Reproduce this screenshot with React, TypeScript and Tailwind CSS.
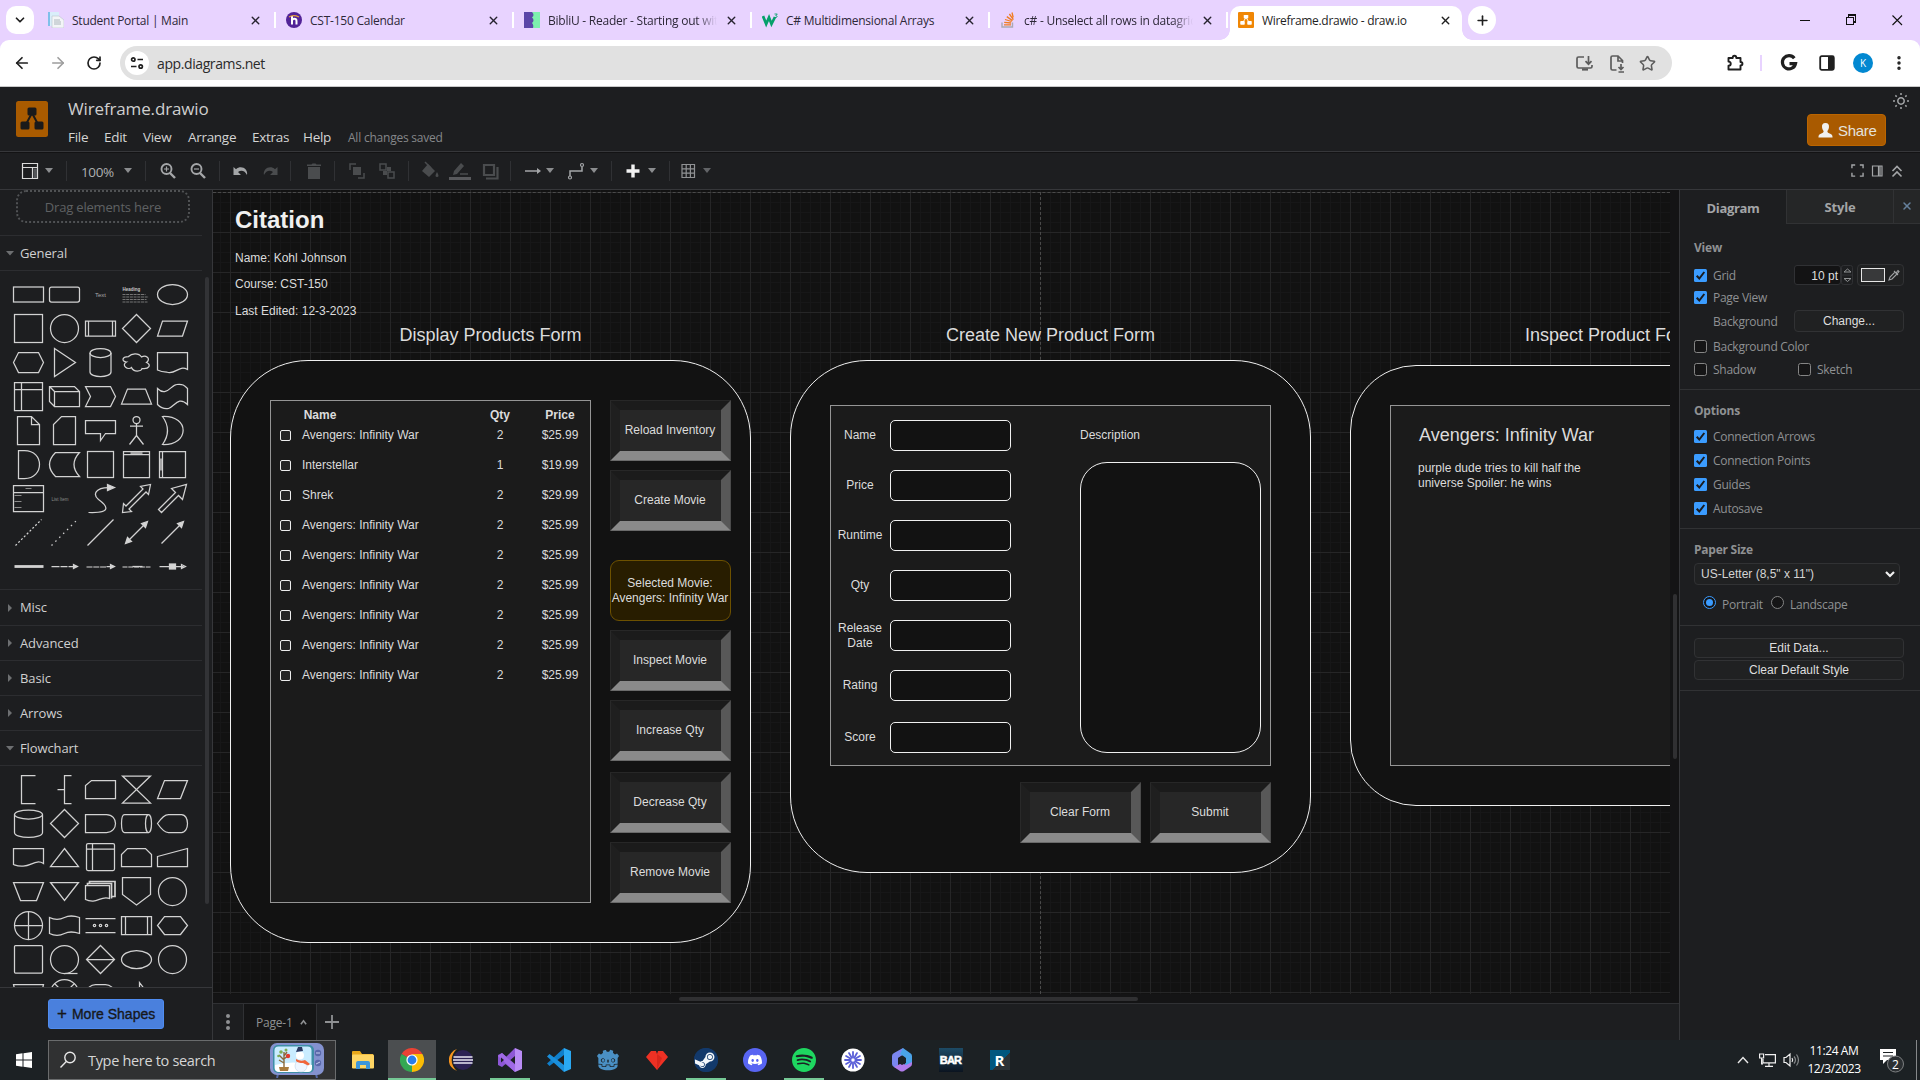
import React from "react";
import { ArrowLeft, ArrowRight, RotateCw, ChevronDown, X, Plus, Star, EllipsisVertical } from "lucide-react";
import { SiDiscord, SiSpotify, SiSteam, SiGodotengine } from "react-icons/si";

const UI = "font-['Open_Sans',sans-serif]";
const ARIAL = "font-['Liberation_Sans',sans-serif]";

/* ---------- Browser chrome ---------- */

function Tab({ icon, title, fade }: { icon: React.ReactNode; title: string; fade?: boolean }) {
  return (
    <div className="flex h-full w-[238px] shrink-0 items-center">
      <div className="flex h-4 w-4 shrink-0 items-center justify-center">{icon}</div>
      <div
        className={
          "ml-2 w-[169px] overflow-hidden whitespace-nowrap pt-[2px] text-[12px] tracking-[-0.24px] text-[#2d2838] " +
          (fade ? "[mask-image:linear-gradient(to_right,black_88%,transparent)]" : "")
        }
      >
        {title}
      </div>
      <X className="ml-[8px] h-[13px] w-[13px] shrink-0 text-[#26222e]" strokeWidth={2.6} />
      <div className="ml-[12px] h-4 w-[2px] shrink-0 bg-white" />
    </div>
  );
}

const DrawioMark = ({ bg, fg }: { bg: string; fg: string }) => (
  <svg viewBox="0 0 32 36" preserveAspectRatio="none" className="h-full w-full">
    <rect width="32" height="36" rx="2.5" fill={bg} />
    <path d="M16 12 8.500 26M16 12l7.500 14" stroke={fg} strokeWidth="2" />
    <rect x="11.500" y="6.500" width="9" height="8" rx="1.500" fill={fg} />
    <rect x="4.500" y="20.500" width="9" height="8" rx="1.500" fill={fg} />
    <rect x="18.500" y="20.500" width="9" height="8" rx="1.500" fill={fg} />
  </svg>
);

function TabStrip() {
  return (
    <div className={"flex h-10 items-stretch bg-[#e8d3ff] " + UI}>
      <div className="ml-[6px] mt-[6px] flex h-7 w-7 shrink-0 items-center justify-center rounded-[10px] bg-white">
        <ChevronDown className="h-[14px] w-[14px] text-[#1f1f1f]" strokeWidth={3} />
      </div>
      <div className="ml-[14px] flex h-[40px]">
        <Tab
          title="Student Portal | Main"
          icon={
            <svg viewBox="0 0 16 16" className="h-4 w-4">
              <rect width="11" height="14" fill="#7fc0ea" />
              <rect x="2" width="9" height="14" fill="#d9eefa" />
              <path d="M4 4h7l5 4v8H4z" fill="#f3f5f7" stroke="#b8c4cc" strokeWidth=".6" />
              <path d="M6 8h6M6 10h7M6 12h7" stroke="#9aa6ad" strokeWidth=".8" />
            </svg>
          }
        />
        <Tab
          title="CST-150 Calendar"
          icon={
            <svg viewBox="0 0 16 16" className="h-4 w-4">
              <circle cx="8" cy="8" r="8" fill="#522398" />
              <path d="M6 4v8.500M6 9c0-3 4.500-3 4.500 0v3.500" stroke="#fff" strokeWidth="2" fill="none" />
              <path d="M3 5c3-2 6-2 10 0" stroke="#e8a33b" strokeWidth="1.200" fill="none" />
            </svg>
          }
        />
        <Tab
          title="BibliU - Reader - Starting out with"
          fade
          icon={
            <svg viewBox="0 0 16 16" className="h-4 w-4">
              <rect width="16" height="16" fill="#7df0ae" />
              <path d="M0 0h8c2 2 2 4 0 5.500 2 1.500 2 4 0 5.500 1.500 2 1.500 3 1 5H0z" fill="#5b46a8" />
            </svg>
          }
        />
        <Tab
          title="C# Multidimensional Arrays"
          icon={
            <svg viewBox="0 0 16 16" className="h-4 w-4">
              <path d="M1 4l3.200 8L7 5.500 9.500 12 13 5" stroke="#05a06b" strokeWidth="2.700" fill="none" />
              <path d="M12.500 2h2.800l-1.500 1.600c2 0 1.800 2.300-.8 1.800" stroke="#05a06b" strokeWidth=".9" fill="none" />
            </svg>
          }
        />
        <div className="flex w-[236px] overflow-hidden">
          <Tab
            title="c# - Unselect all rows in datagridview"
            fade
            icon={
              <svg viewBox="0 0 16 16" className="h-4 w-4">
                <path d="M2 10.500V15h10.500v-4.500" stroke="#a9a9b4" strokeWidth="1.400" fill="none" />
                <path d="M4 12.800h7M4.200 10.300l6.900.7M5 7.500l6.600 2M6.800 4.600l5.700 4M9.400 2l4 5.600M12 .500l1.200 5" stroke="#f07c22" strokeWidth="1.300" />
              </svg>
            }
          />
        </div>
      </div>
      <div className="relative -ml-[6px] mt-[6px] flex h-[34px] w-[232px] items-center rounded-t-[10px] bg-white pb-[6px] pl-2 before:absolute before:-left-[10px] before:bottom-0 before:h-[10px] before:w-[10px] before:bg-[radial-gradient(circle_at_0_0,#e8d3ff_9.500px,white_10px)] after:absolute after:-right-[10px] after:bottom-0 after:h-[10px] after:w-[10px] after:bg-[radial-gradient(circle_at_100%_0,#e8d3ff_9.500px,white_10px)]">
        <div className="h-4 w-4 shrink-0">
          <DrawioMark bg="#f08705" fg="#fff" />
        </div>
        <div className="ml-2 w-[169px] whitespace-nowrap pt-[2px] text-[12px] tracking-[-0.3px] text-[#1f1f1f]">Wireframe.drawio - draw.io</div>
        <X className="ml-[8px] h-[13px] w-[13px] shrink-0 text-[#1f1f1f]" strokeWidth={2.600} />
      </div>
      <div className="ml-[6px] mt-[6px] flex h-7 w-7 items-center justify-center rounded-full bg-white">
        <Plus className="h-[15px] w-[15px] text-[#1f1f1f]" strokeWidth={2.600} />
      </div>
      <svg className="ml-auto mr-[16px] mt-[10px] h-5 w-[110px]" viewBox="0 0 110 20" fill="none" stroke="#111" strokeWidth="1.100" shapeRendering="crispEdges">
        <path d="M6 10.500h10" />
        <rect x="52.500" y="7.500" width="7" height="7" />
        <path d="M54.500 7v-2h7v7h-2" />
        <path d="M98.500 5.500l9.500 9.500M108 5.500l-9.500 9.500" shapeRendering="auto" />
      </svg>
    </div>
  );
}

function AddressBar() {
  return (
    <div className={"bg-[#e8d3ff] " + UI}>
      <div className="flex h-[47px] items-center rounded-t-[9px] border-b border-[#c9c9c9] bg-white text-[#1f1f1f]">
        <ArrowLeft className="ml-[13px] h-[18px] w-[18px]" strokeWidth={2.300} />
        <ArrowRight className="ml-[18px] h-[18px] w-[18px] text-[#9d9d9d]" strokeWidth={2.200} />
        <RotateCw className="ml-[19px] h-[16px] w-[16px]" strokeWidth={2.500} />
        <div className="ml-[18px] flex h-[34px] w-[1552px] items-center rounded-full bg-[#e1e1e1] pl-[5px]">
          <div className="flex h-6 w-6 items-center justify-center rounded-full bg-white">
            <svg viewBox="0 0 14 14" className="h-[14px] w-[14px]" fill="none" stroke="#1f1f1f" strokeWidth="1.700">
              <circle cx="3.300" cy="3.500" r="1.700" />
              <path d="M7.500 3.500H13M1 10.500h5.500" />
              <circle cx="10.700" cy="10.500" r="1.700" />
            </svg>
          </div>
          <div className="ml-2 text-[14px] tracking-[-0.400px] text-[#2b2b2b]">app.diagrams.net</div>
          <svg className="ml-auto h-5 w-5" viewBox="0 0 20 20" fill="none" stroke="#5c5c5c" strokeWidth="1.700">
            <path d="M10 4H4.500Q3 4 3 5.500v8Q3 15 4.500 15h12q1.500 0 1.500-1.500V12M14.500 3v8M11.500 8.200l3 3 3-3" />
            <path d="M8 16.500h6" strokeWidth="2.200" />
          </svg>
          <svg className="ml-[13px] h-5 w-5" viewBox="0 0 20 20" fill="none" stroke="#5c5c5c" strokeWidth="1.700">
            <path d="M9.500 17H5.500Q4 17 4 15.500v-11Q4 3 5.500 3H11l4.500 4.500V10M11 3v5h4.500M14 11v5M11.500 14l2.500 2.500 2.500-2.500M11.500 19h5.500" />
          </svg>
          <Star className="ml-[12px] mr-[16px] h-[17px] w-[17px] text-[#5c5c5c]" strokeWidth={2.200} />
        </div>
        <svg className="ml-[53px] h-5 w-5" viewBox="0 0 20 20" fill="none" stroke="#1f1f1f" strokeWidth="1.900" strokeLinejoin="round">
          <path d="M3.500 5h4.200c0-3 3.600-3 3.600 0H15.500v4c2.600 0 2.600 3.500 0 3.500V16.500h-12v-3.700c3 0 3-4.200 0-4.200z" />
        </svg>
        <div className="ml-[15px] h-4 w-[2px] bg-[#e8d3ff]" />
        <svg className="ml-[18px] h-[18px] w-[18px]" viewBox="0 0 18 18" fill="none" stroke="#1f1f1f" strokeWidth="3.200">
          <path d="M14.300 4.300A6.600 6.600 0 1 0 15.500 9.600H9.500" />
        </svg>
        <svg className="ml-[21px] h-[16px] w-[16px]" viewBox="0 0 16 16">
          <rect x="1.200" y="1.200" width="13.600" height="13.600" rx="1.500" fill="none" stroke="#1f1f1f" strokeWidth="1.800" />
          <rect x="9" y="1" width="6" height="14" fill="#1f1f1f" />
        </svg>
        <div className="ml-[18px] flex h-5 w-5 items-center justify-center rounded-full bg-[#0288d1] text-[10px] text-white">K</div>
        <EllipsisVertical className="ml-[17px] h-[18px] w-[18px]" strokeWidth={2.600} />
      </div>
    </div>
  );
}

/* ---------- Application header ---------- */

const MENUS = [
  { t: "File", c: "w-[36px]" },
  { t: "Edit", c: "w-[39px]" },
  { t: "View", c: "w-[45px]" },
  { t: "Arrange", c: "w-[64px]" },
  { t: "Extras", c: "w-[51px]" },
  { t: "Help", c: "w-[45px]" },
];

function Header() {
  return (
    <div className={"flex h-[65px] border-b border-[#36373a] bg-[#1d1e20] " + UI}>
      <div className="ml-4 mt-[14px] h-9 w-8">
        <DrawioMark bg="#a95b00" fg="#1a1a1a" />
      </div>
      <div className="ml-5 mt-[9px]">
        <div className="text-[17px] leading-[26px] tracking-[-0.14px] text-[#cfcfcf]">Wireframe.drawio</div>
        <div className="mt-[5px] flex text-[13.500px] leading-[20px] tracking-[-0.300px] text-[#d4d4d4]">
          {MENUS.map((m) => (
            <div key={m.t} className={m.c}>
              {m.t}
            </div>
          ))}
          <div className="text-[12px] leading-[21px] tracking-[-0.220px] text-[#85878a]">All changes saved</div>
        </div>
      </div>
      <div className={"ml-auto mt-[27px] flex h-8 w-[79px] items-center rounded-[4px] border border-[#bb6500] bg-[#a95a00] pl-[10px] pt-[2px] text-[15px] tracking-[-0.3px] text-[#e5e2dd] " + ARIAL}>
        <svg viewBox="0 0 16 16" className="mb-[2px] mr-[5px] h-[15px] w-[15px]" fill="#f0f0f0">
          <path d="M8 0c3 0 4 2 3.700 4.500C11.400 7 10.500 8 10 8.600c0 1.500.5 1.800 2.500 2.500C15 12 15.500 13 15.500 15.500H.5C.5 13 1 12 3.500 11.100 5.500 10.400 6 10.100 6 8.600 5.500 8 4.600 7 4.300 4.500 4 2 5 0 8 0z" />
        </svg>
        Share
      </div>
      <svg className="ml-[2px] mr-[6px] mt-[4px] h-[20px] w-[26px]" viewBox="-13 -10 26 20" fill="none" stroke="#a4a6a8" strokeWidth="1.500">
        <circle r="3.200" />
        <path d="M0-8v2M0 6v2M-8 0h2M6 0h2M-5.600-5.600l1.300 1.300M4.300 4.300l1.300 1.300M-5.600 5.600l1.300-1.300M4.300-4.300l1.300-1.300" />
      </svg>
    </div>
  );
}

const Sep = ({ c }: { c: string }) => <div className={"h-5 w-px shrink-0 bg-[#303134] " + c} />;
const Caret = ({ c, dim }: { c: string; dim?: boolean }) => (
  <svg viewBox="0 0 10 6" className={"h-[5px] w-[8px] shrink-0 " + c}>
    <path d="M0 0h10L5 6z" fill={dim ? "#626467" : "#8b8d8f"} />
  </svg>
);
const Ico = ({ c, s = "#b0b2b4", children }: { c: string; s?: string; children: React.ReactNode }) => (
  <svg viewBox="0 0 20 20" className={"h-5 w-5 shrink-0 " + c} fill="none" stroke={s} strokeWidth="1.500">
    {children}
  </svg>
);

function Toolbar() {
  const dim = "#4a4c4e";
  return (
    <div className={"flex h-[38px] items-center border-b border-[#36373a] bg-[#1d1e20] shadow-[inset_0_1px_0_#131314] " + UI}>
      <Ico c="ml-[20px]" s="#dadada">
        <path d="M2.500 2.500h15v15h-15zM2.500 6.500h15M12.500 6.500v11" strokeWidth="1.200" />
        <path d="M13.500 7.500h3.500v9.500h-3.500z" fill="#55575a" stroke="none" />
      </Ico>
      <Caret c="ml-[5px]" />
      <Sep c="ml-[13px]" />
      <div className="ml-[14px] mt-[4px] w-[40px] text-[13.500px] tracking-[-0.4px] text-[#aeb0b2]">100%</div>
      <Caret c="ml-[3px]" />
      <Sep c="ml-[13px]" />
      <Ico c="ml-[12px]" s="#a4a6a8">
        <circle cx="8.500" cy="8" r="5" strokeWidth="1.900" />
        <path d="M12 12l5 5" strokeWidth="2.400" />
        <path d="M6 8h5M8.500 5.500v5" strokeWidth="1.200" />
      </Ico>
      <Ico c="ml-[10px]" s="#a4a6a8">
        <circle cx="8.500" cy="8" r="5" strokeWidth="1.900" />
        <path d="M12 12l5 5" strokeWidth="2.400" />
        <path d="M6 8h5" strokeWidth="1.200" />
      </Ico>
      <Sep c="ml-[11px]" />
      <Ico c="ml-[11px]" s="none">
        <path d="M2.500 6v8h7.500l-3-3c3-2.500 7-1.500 9 3 1.500-6-6-10.500-11-5.700z" fill="#a4a6a8" />
      </Ico>
      <Ico c="ml-[9px]" s="none">
        <path d="M17.500 6v8H10l3-3c-3-2.500-7-1.500-9 3-1.500-6 6-10.500 11-5.700z" fill={dim} />
      </Ico>
      <Sep c="ml-[10px]" />
      <Ico c="ml-[13px]" s="none">
        <path d="M4 6h12v12H4zM3 3.500h4.500L8.500 2.500h3l1 1H17V5H3z" fill={dim} />
      </Ico>
      <Sep c="ml-[10px]" />
      <Ico c="ml-[12px]" s={dim}>
        <path d="M9 3H3v6M11 17h6v-5" />
        <path d="M6 6h8v8H6z" fill={dim} stroke="none" />
      </Ico>
      <Ico c="ml-[10px]" s={dim}>
        <path d="M3 3h6v6H3z" />
        <path d="M10 6h4v4h-4zM6 10h4v4H6z" fill={dim} stroke="none" />
        <path d="M11 11h6v6h-6z" />
      </Ico>
      <Sep c="ml-[11px]" />
      <Ico c="ml-[11px]" s="none">
        <path d="M8 3l7 7-6 6-7-6z" fill={dim} />
        <path d="M5 1l6 6" stroke={dim} strokeWidth="1.500" />
        <path d="M17 11q3 5 0 5t0-5z" fill={dim} />
      </Ico>
      <svg viewBox="0 0 22 20" className="ml-[9px] h-5 w-[22px] shrink-0">
        <path d="M4 14l1-4 7-8 3 3-7 8z" fill={dim} />
        <path d="M11 13h8" stroke={dim} strokeWidth="1.500" />
        <rect x="0" y="16" width="22" height="3" fill="#58595c" />
      </svg>
      <Ico c="ml-[9px]" s={dim}>
        <path d="M4 4h10v10H4z" strokeWidth="2.200" />
        <path d="M17.500 6v11.500H6" strokeWidth="2.200" />
      </Ico>
      <Sep c="ml-[10px]" />
      <Ico c="ml-[12px]" s="#a4a6a8">
        <path d="M2 10h14" />
        <path d="M14 7l4 3-4 3z" fill="#a4a6a8" stroke="none" />
      </Ico>
      <Caret c="ml-[3px]" />
      <Ico c="ml-[12px]" s="#a4a6a8">
        <path d="M4 15v-5h12V6" />
        <circle cx="4" cy="16.500" r="1.500" strokeWidth="1.200" />
        <circle cx="16" cy="4" r="1.500" strokeWidth="1.200" />
      </Ico>
      <Caret c="ml-[4px]" />
      <Sep c="ml-[13px]" />
      <Ico c="ml-[11px]" s="#f2f2f2">
        <path d="M10 3.500v13M3.500 10h13" strokeWidth="3.400" />
      </Ico>
      <Caret c="ml-[5px]" />
      <Sep c="ml-[13px]" />
      <Ico c="ml-[8px]" s="#909294">
        <path d="M4 3.500h12.500v13H4zM8.200 3.500v13M12.400 3.500v13M4 7.800h12.500M4 12.200h12.500" strokeWidth="1.200" />
      </Ico>
      <Caret c="ml-[5px]" dim />
      <div className="ml-auto mr-[16px] flex items-center gap-[6px] text-[#a4a6a8]">
        <svg viewBox="0 0 14 14" className="h-[13px] w-[13px]" fill="none" stroke="currentColor" strokeWidth="1.500">
          <path d="M1 4.500V1h3.500M9.500 1H13v3.500M13 9.500V13H9.500M4.500 13H1V9.500" />
        </svg>
        <svg viewBox="0 0 12 12" className="h-[12px] w-[14px]" fill="none" stroke="currentColor" strokeWidth="1.200">
          <path d="M1.500 1h9.500v10H1.500zM7.500 1v10M9 1v10" />
        </svg>
        <svg viewBox="0 0 14 14" className="h-[14px] w-[14px]" fill="none" stroke="currentColor" strokeWidth="1.600">
          <path d="M2.500 7L7 2.500 11.500 7M2.500 12.500L7 8l4.500 4.500" />
        </svg>
      </div>
    </div>
  );
}

/* ---------- Shape library (each drawing is centred on 0,0) ---------- */

const GENERAL: React.ReactNode[] = [
  <rect x="-15" y="-7.500" width="30" height="15" />,
  <rect x="-15" y="-7.500" width="30" height="15" rx="2" />,
  <text x="0" y="2" fontSize="6" textAnchor="middle" stroke="none" fill="#a8a8a8">Text</text>,
  <g>
    <text x="-14" y="-3.500" fontSize="4.500" fontWeight="bold" stroke="none" fill="#c8c8c8">Heading</text>
    <path d="M-14 0h23M-14 2.500h26M-14 5h24M-14 7.500h25" strokeWidth=".8" strokeDasharray="3 .7" stroke="#8b8b8b" />
  </g>,
  <ellipse rx="15" ry="10" />,
  <rect x="-14" y="-14" width="28" height="28" />,
  <circle r="14" />,
  <path d="M-15-7.500h30v15h-30zM-12-7.500v15M12-7.500v15" />,
  <path d="M0-14L14 0 0 14-14 0z" />,
  <path d="M-10-7.500h25l-5 15h-25z" />,
  <path d="M-10-10h20l5 10-5 10h-20l-5-10z" />,
  <path d="M-10-14L11 0-10 14z" />,
  <g>
    <ellipse cy="-9.500" rx="10.500" ry="4.500" />
    <path d="M-10.500-9.500v19c0 6 21 6 21 0v-19" />
  </g>,
  <path d="M-8-6C-15-6-15-1-10-0.500-16 3-8 8-5 5-3 10 5 9 5.500 6 13 7 15 2 10 0 15-4 9-8 5-5.500 2-10-5-9-8-6z" />,
  <path d="M-15-10h30v17c-9-5-12 6-21 2.500-4 0-6-.5-9-2z" />,
  <path d="M-14-14h28v28h-28zM-7-14v28M-14-7h28" />,
  <path d="M-15-10H10l5 5v15H-10l-5-5zM-10 10V-5H15M-10-5l-5-5" />,
  <path d="M-15-10h25l5 10-5 10h-25l5-10z" />,
  <path d="M-9-7.500H9l6 15h-30z" />,
  <path d="M-15-8c9 9 14-4 19-4 6-1 8 1 11 4V8C6-1 2 10-4 12c-5 1-8-1-11-4z" />,
  <path d="M-11-14h14l8 8v20h-22zM3-14v8h8" />,
  <path d="M-3-14h14v28h-22V-6z" />,
  <path d="M-15-10h30V3H5L0 10V3h-15z" />,
  <g>
    <circle cy="-10.500" r="3.500" />
    <path d="M0-7V5M-6.500-4.500h13M0 5l-7 9M0 5l7 9" />
  </g>,
  <path d="M-10-14c28-1 27 29 0 28q10-14 0-28z" />,
  <path d="M-10-14H-4c20 0 20 28 0 28H-10z" />,
  <path d="M-9-12h24q-11 12 0 24H-9q-12-12 0-24z" />,
  <rect x="-13" y="-13" width="26" height="26" />,
  <path d="M-13-13h26v26h-26zM-13-10h26M-6-11.500h12" />,
  <path d="M-13-13h26v26h-26zM-10-13v26M-11.500-6v12" />,
  <g>
    <path d="M-15-13h30v26h-30zM-15-6h30" />
    <path d="M-14-3h7M-14 3h7M-14 9h7M-3-10h6" strokeWidth=".9" stroke="#999" />
  </g>,
  <text x="-13" y="2" fontSize="4.500" stroke="none" fill="#8b8b8b">List Item</text>,
  <g>
    <path d="M-12 14c26 1 17-8 10-13-6-5-3-12 10-12" />
    <path d="M7-14l7 3-7 3z" fill="#d5d5d5" />
  </g>,
  <path d="M-14 14l1-9 2.500 2.500L6.500-9.500 4-12l10-2-2 10-2.500-2.500L-7.500 10.500-5 13z" />,
  <path d="M-14 11l17-17-4-4 15-4-4 15-4-4-17 17z" />,
  <path d="M-13 13L13-13" strokeDasharray="2 2" />,
  <path d="M-13 13L13-13" strokeDasharray="1.500 4" />,
  <path d="M-13 13L13-13" />,
  <g>
    <path d="M-9 9L9-9" />
    <path d="M5-9l6-2-2 6zM-5 9l-6 2 2-6z" fill="#d5d5d5" />
  </g>,
  <g>
    <path d="M-11 11L9-9" />
    <path d="M5-9l6-2-2 6z" fill="#d5d5d5" />
  </g>,
  <path d="M-14 0h29" strokeWidth="2.800" />,
  <g>
    <path d="M-13 0h8M-4 0h7" strokeDasharray="8 1" />
    <path d="M4 0h8M9-2l4 2-4 2z" fill="#d5d5d5" />
  </g>,
  <g>
    <path d="M-14 .500h20" strokeDasharray="6 .8" stroke="#9b9b9b" strokeWidth="1.700" />
    <path d="M6 0h6M10-2l4 2-4 2z" fill="#d5d5d5" />
  </g>,
  <g>
    <path d="M-14 .500h28" strokeDasharray="5 .8" stroke="#9b9b9b" strokeWidth="1.700" />
    <path d="M-4 0h10" />
  </g>,
  <g>
    <path d="M-13 0H11M9-2l4 2-4 2z" />
    <rect x="-3" y="-2.500" width="6" height="5" fill="#d5d5d5" />
  </g>,
];

const FLOW: React.ReactNode[] = [
  <path d="M7-14H-7v28H7" />,
  <path d="M7-14H0v28h7M0 0h-7" />,
  <path d="M-9-9h24V9h-30V-4z" />,
  <path d="M-14-13.500h28l-28 27h28z" />,
  <path d="M-8-9h23L8 9h-23z" />,
  <g>
    <ellipse cy="-9" rx="14" ry="4.500" />
    <path d="M-14-9V9c0 6.500 28 6.500 28 0V-9" />
  </g>,
  <path d="M0-14L14 0 0 14-14 0z" />,
  <path d="M-15-9H6c12 0 12 18 0 18h-21z" />,
  <g>
    <path d="M-12-9h24M12 9h-24c-4 0-4-18 0-18" />
    <ellipse cx="12" rx="3" ry="9" />
  </g>,
  <path d="M-15 0c4-6 8-9 11-9H9C17-9 17 9 9 9H-4C-7 9-11 6-15 0z" />,
  <path d="M-15-9h30V6C7 1 2 10-7 8.500c-4 0-5-.5-8-1.500z" />,
  <path d="M0-9L14 9h-28z" />,
  <g>
    <rect x="-14" y="-14" width="28" height="27" rx="1.500" />
    <path d="M-8-14v27M-14-8.500h28" />
  </g>,
  <path d="M-9-9H9l6 6V9h-30V-3z" />,
  <path d="M-15-1L15-9V9h-30z" />,
  <path d="M-15-9h30L8 9H-8z" />,
  <path d="M-14-9h28L0 9z" />,
  <g>
    <path d="M-15-6H9V7C2 4-2 10-8 9.500c-3 0-5-.5-7-1.500z" />
    <path d="M-13-6v-2H11V7M-11-8v-2H14.500V5H11" strokeWidth="1.700" />
  </g>,
  <path d="M-14-14h28V3L0 13.500-14 3z" />,
  <circle r="14" />,
  <g>
    <circle r="14" />
    <path d="M0-14v28M-14 0h28" />
  </g>,
  <path d="M-15-8c6 3 11 2 15 0s9-2 15 0V8c-6-2-11-2-15 0s-9 3-15 0z" />,
  <g>
    <path d="M-15-7h30M-15 7h30" />
    <circle cx="-6" r="1.200" />
    <circle r="1.200" />
    <circle cx="6" r="1.200" />
  </g>,
  <path d="M-15-9h30V9h-30zM-11-9V9M11-9V9" />,
  <path d="M-8-9H8l7 9-7 9H-8l-7-9z" />,
  <rect x="-14" y="-14" width="28" height="27.500" rx="1" />,
  <g>
    <circle r="14" />
    <path d="M0 14h13" />
  </g>,
  <path d="M0-14L14 0 0 14-14 0zM-14 0h28" />,
  <ellipse rx="15" ry="9" />,
  <circle r="14" />,
  <path d="M-15-9h30L11 9h-22z" />,
  <g>
    <circle r="14" />
    <path d="M-10-10L10 10M10-10L-10 10" />
  </g>,
  <rect x="-14" y="-9" width="28" height="18" rx="9" />,
  <path d="M3-11l6 8H3zM3-11v15" />,
];

function Palette({ items }: { items: React.ReactNode[] }) {
  return (
    <div className="grid grid-cols-[repeat(5,36px)] pl-[10px] pt-[6px]">
      {items.map((it, i) => (
        <svg key={i} viewBox="-18.500 -17.500 36 34" className="h-[34px] w-9" fill="none" stroke="#d2d2d2" strokeWidth="1.250" fontFamily="Liberation Sans">
          {it}
        </svg>
      ))}
    </div>
  );
}

function Section({ title, open, tall }: { title: string; open?: boolean; tall?: boolean }) {
  return (
    <div className={"flex shrink-0 items-center border-b border-[#2c2d30] " + (tall ? "h-9" : "h-[35px]")}>
      <svg viewBox="0 0 8 8" className="ml-[6px] h-[8px] w-[8px]" fill="#6d6f71">
        {open ? <path d="M0 2h8L4 6.500z" /> : <path d="M2 0l4 4-4 4z" />}
      </svg>
      <div className={"ml-[6px] text-[13px] tracking-[-0.1px] text-[#d0d0d0] " + (tall ? "" : "pt-[2px]")}>{title}</div>
    </div>
  );
}

function Sidebar() {
  return (
    <div className={"flex h-[850px] w-[213px] shrink-0 flex-col border-r border-[#36373a] bg-[#1d1e20] " + UI}>
      <div className="flex h-[797px] overflow-hidden">
        <div className="flex w-[202px] shrink-0 flex-col">
          <div className="h-[46px] shrink-0 overflow-hidden border-b border-[#2c2d30] pl-[16px]">
            <div className="flex h-[33px] w-[174px] items-center justify-center rounded-[10px] border-2 border-dotted border-[#505254] pt-[2px] text-[13px] tracking-[-0.18px] text-[#5f6163]">
              Drag elements here
            </div>
          </div>
          <Section title="General" open />
          <div className="h-[319px] shrink-0 border-b border-[#2c2d30]">
            <Palette items={GENERAL} />
          </div>
          <Section title="Misc" tall />
          <Section title="Advanced" />
          <Section title="Basic" />
          <Section title="Arrows" />
          <Section title="Flowchart" open />
          <Palette items={FLOW} />
        </div>
        <div className="ml-[3px] mt-[87px] h-[627px] w-[4px] rounded-full bg-[#323336]" />
      </div>
      <div className="flex-1 border-t border-[#36373a] pl-[48px] pt-[11px]">
        <div className={"flex h-[30px] w-[116px] items-center rounded-[3px] border border-[#4f8cf0] bg-[#4a80dd] pl-[8px] text-[14px] text-[#17181a] [-webkit-text-stroke:0.35px_#17181a] " + ARIAL}>
          <span className="mr-[5px] text-[17px]">+</span>More Shapes
        </div>
      </div>
    </div>
  );
}

/* ---------- Diagram canvas ---------- */

type Box = { x: number; y: number; w: number; h: number; r?: number };

const Rect = ({ x, y, w, h, r = 0, c }: Box & { c: string }) => (
  <div className={"absolute border " + c} style={{ left: x, top: y, width: w + 1, height: h + 1, borderRadius: r }} />
);

const Label = ({ x, y, children, c = "" }: { x: number; y: number; children: React.ReactNode; c?: string }) => (
  <div className={"absolute -translate-x-1/2 -translate-y-1/2 whitespace-nowrap text-center leading-[15px] " + c} style={{ left: x, top: y }}>
    {children}
  </div>
);

const LeftText = ({ x, y, children, c = "" }: { x: number; y: number; children: React.ReactNode; c?: string }) => (
  <div className={"absolute -translate-y-1/2 whitespace-nowrap leading-[15px] " + c} style={{ left: x, top: y }}>
    {children}
  </div>
);

const Bevel = ({ x, y, t }: { x: number; y: number; t: string }) => (
  <div
    className="absolute flex h-[61px] w-[121px] items-center justify-center whitespace-nowrap border-[10px] border-b-[#8a8a8a] border-l-[#1f1f1f] border-r-[#585858] border-t-[#1b1b1b] bg-[#272727] pb-px pr-px outline-1 -outline-offset-1 outline-[#3a3a3a]/40"
    style={{ left: x, top: y }}
  >
    {t}
  </div>
);

const MOVIES = [
  ["Avengers: Infinity War", "2", "$25.99"],
  ["Interstellar", "1", "$19.99"],
  ["Shrek", "2", "$29.99"],
  ["Avengers: Infinity War", "2", "$25.99"],
  ["Avengers: Infinity War", "2", "$25.99"],
  ["Avengers: Infinity War", "2", "$25.99"],
  ["Avengers: Infinity War", "2", "$25.99"],
  ["Avengers: Infinity War", "2", "$25.99"],
  ["Avengers: Infinity War", "2", "$25.99"],
];

const ACTIONS: [string, number][] = [
  ["Reload Inventory", 400],
  ["Create Movie", 470],
  ["Inspect Movie", 630],
  ["Increase Qty", 700],
  ["Decrease Qty", 772],
  ["Remove Movie", 842],
];

const FIELDS: { label: React.ReactNode; y: number; labelY: number }[] = [
  { label: "Name", y: 420, labelY: 435 },
  { label: "Price", y: 470, labelY: 485 },
  { label: "Runtime", y: 520, labelY: 535 },
  { label: "Qty", y: 570, labelY: 585 },
  { label: <>Release<br />Date</>, y: 620, labelY: 636 },
  { label: "Rating", y: 670, labelY: 685 },
  { label: "Score", y: 722, labelY: 737 },
];

const FORM = "border-[#f0f0f0] bg-[#121212]";
const PANEL = "border-[#959595] bg-[#1b1b1b]";

function Canvas() {
  return (
    <div className="relative h-[804px] w-[1457px] shrink-0 overflow-hidden bg-[#121212] bg-[linear-gradient(to_right,#262627_1px,transparent_1px),linear-gradient(to_bottom,#262627_1px,transparent_1px),linear-gradient(to_right,#171718_1px,transparent_1px),linear-gradient(to_bottom,#171718_1px,transparent_1px)] bg-[position:17px_2px,17px_2px,7px_2px,7px_2px] bg-[size:40px_40px,40px_40px,10px_10px,10px_10px]">
      <div className={"absolute -left-[213px] -top-[190px] h-[1080px] w-[1920px] text-[12px] text-[#dcdcdc] " + ARIAL}>
        <div className="absolute left-[213px] top-[192px] w-[1457px] border-t border-dashed border-[#4a4a4a]" />
        <div className="absolute left-[1040px] top-[192px] h-[802px] border-l border-dashed border-[#4a4a4a]" />

        <LeftText x={235} y={219} c="text-[24px] font-bold text-[#f0f0f0]">Citation</LeftText>
        <LeftText x={235} y={258}>Name: Kohl Johnson</LeftText>
        <LeftText x={235} y={284}>Course: CST-150</LeftText>
        <LeftText x={235} y={311}>Last Edited: 12-3-2023</LeftText>

        <Label x={490.500} y={335} c="text-[18px]">Display Products Form</Label>
        <Rect x={230} y={360} w={520} h={582} r={78} c={FORM} />
        <Rect x={270} y={400} w={320} h={502} c={PANEL} />
        <Label x={320} y={415} c="font-bold">Name</Label>
        <Label x={500} y={415} c="font-bold">Qty</Label>
        <Label x={560} y={415} c="font-bold">Price</Label>
        {MOVIES.map(([name, qty, price], i) => (
          <React.Fragment key={i}>
            <Rect x={280} y={430 + i * 30} w={10} h={10} r={2} c="border-[#ededed] bg-[#262626]" />
            <LeftText x={302} y={435 + i * 30}>{name}</LeftText>
            <Label x={500} y={435 + i * 30}>{qty}</Label>
            <Label x={560} y={435 + i * 30}>{price}</Label>
          </React.Fragment>
        ))}
        {ACTIONS.map(([t, y]) => (
          <Bevel key={t} x={610} y={y} t={t} />
        ))}
        <Rect x={610} y={560} w={120} h={60} r={9} c="border-[#6d5100] bg-[#281d00]" />
        <Label x={670} y={591}>Selected Movie:<br />Avengers: Infinity War</Label>

        <Label x={1050.500} y={335} c="text-[18px]">Create New Product Form</Label>
        <Rect x={790} y={360} w={520} h={512} r={77} c={FORM} />
        <Rect x={830} y={405} w={440} h={360} c={PANEL} />
        {FIELDS.map((f) => (
          <React.Fragment key={f.y}>
            <Label x={860} y={f.labelY}>{f.label}</Label>
            <Rect x={890} y={f.y} w={120} h={30} r={5} c={FORM} />
          </React.Fragment>
        ))}
        <LeftText x={1080} y={435}>Description</LeftText>
        <Rect x={1080} y={462} w={180} h={290} r={27} c={FORM} />
        <Bevel x={1020} y={782} t="Clear Form" />
        <Bevel x={1150} y={782} t="Submit" />

        <LeftText x={1525} y={335} c="text-[18px]">Inspect Product Form</LeftText>
        <Rect x={1350} y={365} w={520} h={440} r={66} c={FORM} />
        <Rect x={1390} y={405} w={440} h={360} c={PANEL} />
        <LeftText x={1419} y={435} c="text-[18px]">Avengers: Infinity War</LeftText>
        <LeftText x={1418} y={476}>purple dude tries to kill half the<br />universe Spoiler: he wins</LeftText>
      </div>
    </div>
  );
}

function CanvasArea() {
  return (
    <div className="flex w-[1466px] shrink-0 flex-col bg-[#141415]">
      <div className="flex">
        <Canvas />
        <div className="ml-[3px] mt-[404px] h-[165px] w-[4px] rounded-full bg-[#303032]" />
      </div>
      <div className="h-[9px] pt-[3px]">
        <div className="ml-[466px] h-[4px] w-[459px] rounded-full bg-[#303032]" />
      </div>
      <div className={"flex h-[37px] items-stretch border-t border-[#303134] bg-[#1d1e20] text-[#8f9193] " + UI}>
        <svg viewBox="0 0 30 36" className="h-9 w-[30px]" fill="#8f9193">
          <circle cx="15" cy="12" r="2" />
          <circle cx="15" cy="18" r="2" />
          <circle cx="15" cy="24" r="2" />
        </svg>
        <div className="flex w-[74px] items-center border-x border-[#303134] bg-[#151516] pl-[12px] pt-[2px] text-[12px] tracking-[-0.2px]">
          Page-1
          <svg viewBox="0 0 8 8" className="mb-[2px] ml-[7px] h-[7px] w-[7px]" fill="none" stroke="currentColor" strokeWidth="1.800">
            <path d="M1 6l3-4 3 4" />
          </svg>
        </div>
        <svg viewBox="0 0 14 14" className="ml-[8px] mt-[11px] h-[14px] w-[14px]" stroke="currentColor" strokeWidth="1.800">
          <path d="M7 0v14M0 7h14" />
        </svg>
      </div>
    </div>
  );
}

/* ---------- Format panel ---------- */

function Check({ on }: { on?: boolean }) {
  return on ? (
    <svg viewBox="0 0 13 13" className="h-[13px] w-[13px] shrink-0">
      <rect width="13" height="13" rx="1.500" fill="#3b9cff" />
      <path d="M2.700 6.700l2.600 2.800L10.300 3" stroke="#1a1b1d" strokeWidth="2" fill="none" />
    </svg>
  ) : (
    <div className="h-[13px] w-[13px] shrink-0 rounded-[2.500px] border border-[#858585] bg-[#151516]" />
  );
}

const Row = ({ on, label, c, children }: { on?: boolean; label: string; c: string; children?: React.ReactNode }) => (
  <div className={"flex items-center " + c}>
    <Check on={on} />
    <div className="ml-[6px] pt-px tracking-[-0.27px]">{label}</div>
    {children}
  </div>
);

const BTN = "flex items-center justify-center rounded-[4px] border border-[#313234] bg-[#202122] text-[12px] text-[#dedede] " + ARIAL;

function FormatPanel() {
  return (
    <div className={"flex h-[850px] flex-1 flex-col border-l border-[#36373a] bg-[#1d1e20] text-[12px] text-[#8f9193] " + UI}>
      <div className="flex h-[34px] text-[13px] font-bold text-[#a3a5a7]">
        <div className="flex w-[106px] items-center justify-center pt-[3px] tracking-[-0.35px]">Diagram</div>
        <div className="flex w-[108px] items-center justify-center border-x border-b border-[#313234] bg-[#252627] pt-[2px] tracking-[-0.2px]">Style</div>
        <div className="flex flex-1 items-center justify-center border-b border-[#313234] bg-[#252627]">
          <X className="mb-[2px] mr-px h-3 w-3 text-[#66809c]" strokeWidth={3} />
        </div>
      </div>
      <div className="h-[166px] border-b border-[#313234] pl-[14px]">
        <div className="mt-[15px] h-[18px] font-bold leading-[18px] tracking-[-0.2px]">View</div>
        <div className="mt-[7px] flex h-[22px] items-center">
          <Row on label="Grid" c="w-[100px]" />
          <div className={"flex h-[20px] w-[47px] items-center justify-end rounded-[3px] border border-[#303134] bg-[#131314] pr-[2px] pt-px text-[12px] text-[#dedede] " + ARIAL}>10 pt</div>
          <svg viewBox="0 0 12 20" className="h-[20px] w-[12px]" fill="none" stroke="#909294" strokeWidth="1">
            <rect x=".5" y=".5" width="11" height="19" rx="2" stroke="#303134" />
            <path d="M0 10h12" stroke="#303134" />
            <path d="M3 7h7L6.500 4zM3 13.500h7l-3.500 3z" />
          </svg>
          <div className="ml-[4px] flex h-[22px] w-[47px] items-center rounded-[4px] border border-[#313234] bg-[#202122] pl-[3px]">
            <div className="h-[14px] w-[24px] border border-[#e6e6e6] bg-[#38393a]" />
            <svg viewBox="0 0 12 12" className="ml-[3px] h-3 w-3" fill="none" stroke="#a0a2a4" strokeWidth="1.100">
              <path d="M1 11l1-3 5-5 2 2-5 5zM6 2l4 4M8 4l2-2.500 1 1L9 5" />
            </svg>
          </div>
        </div>
        <Row on label="Page View" c="mt-[2px] h-[18px]" />
        <div className="mt-[4px] flex h-[22px] items-center">
          <div className="w-[100px] pl-[19px] pt-[2px] tracking-[-0.27px]">Background</div>
          <div className={BTN + " h-[22px] w-[110px]"}>Change...</div>
        </div>
        <Row label="Background Color" c="mt-[4px] h-[20px]" />
        <div className="mt-[2px] flex h-[22px] items-center">
          <Row label="Shadow" c="w-[104px]" />
          <Row label="Sketch" c="" />
        </div>
      </div>
      <div className="h-[139px] border-b border-[#313234] pl-[14px]">
        <div className="mt-[12px] h-[18px] font-bold leading-[18px] tracking-[-0.2px]">Options</div>
        <Row on label="Connection Arrows" c="mt-[4px] h-[24px]" />
        <Row on label="Connection Points" c="h-[24px]" />
        <Row on label="Guides" c="h-[24px]" />
        <Row on label="Autosave" c="h-[24px]" />
      </div>
      <div className="h-[97px] border-b border-[#313234] pl-[14px]">
        <div className="mt-[12px] h-[18px] font-bold leading-[18px] tracking-[-0.25px]">Paper Size</div>
        <div className={"mt-[4px] flex h-[22px] w-[206px] items-center rounded-[4px] border border-[#313234] bg-[#202122] pl-[6px] pr-[4px] text-[12px] text-[#d4d4d4] " + ARIAL}>
          US-Letter (8,5" x 11")
          <svg viewBox="0 0 10 10" className="ml-auto h-[10px] w-[10px]" fill="none" stroke="#f0f0f0" strokeWidth="2.200">
            <path d="M1 3l4 4 4-4" />
          </svg>
        </div>
        <div className="mt-[9px] flex h-[20px] items-center pl-[9px]">
          <div className="mb-[3px] flex h-[13px] w-[13px] items-center justify-center rounded-full border border-[#3b9cff] bg-[#151516]">
            <div className="h-[7px] w-[7px] rounded-full bg-[#3b9cff]" />
          </div>
          <div className="ml-[6px] w-[49px] pt-[2px] tracking-[-0.200px]">Portrait</div>
          <div className="mb-[3px] h-[13px] w-[13px] rounded-full border border-[#858585] bg-[#151516]" />
          <div className="ml-[6px] pt-[2px] tracking-[-0.270px]">Landscape</div>
        </div>
      </div>
      <div className="h-[65px] border-b border-[#313234] pl-[14px] pt-[12px]">
        <div className={BTN + " h-[20px] w-[210px]"}>Edit Data...</div>
        <div className={BTN + " mt-[2px] h-[20px] w-[210px]"}>Clear Default Style</div>
      </div>
    </div>
  );
}

/* ---------- Taskbar ---------- */

const APPS: { icon: React.ReactNode; run?: "active" | "open" }[] = [
  {
    icon: (
      <svg viewBox="0 0 24 24" className="h-6 w-6">
        <path d="M1 4q0-1 1-1h7l2 3h11v14H1z" fill="#e9a81a" />
        <rect x="1" y="6.500" width="22" height="14" rx="1" fill="#ffd664" />
        <path d="M5 21v-6q0-2 2-2h10q2 0 2 2v6h-4v-4H9v4z" fill="#3d97dc" />
      </svg>
    ),
  },
  {
    run: "active",
    icon: (
      <svg viewBox="0 0 24 24" className="h-6 w-6">
        <path d="M12 12L1.600 6A12 12 0 0 1 22.400 6z" fill="#ea4335" />
        <path d="M12 12L22.400 6A12 12 0 0 1 12 24z" fill="#fbbc05" />
        <path d="M12 12v12A12 12 0 0 1 1.600 6z" fill="#34a853" />
        <path d="M12 6h10.400L17 13zM12 24l5.500-9H12z" fill="#fbbc05" />
        <circle cx="12" cy="12" r="5.600" fill="#fff" />
        <circle cx="12" cy="12" r="4.400" fill="#2b7de9" />
      </svg>
    ),
  },
  {
    icon: (
      <svg viewBox="0 0 24 24" className="h-6 w-6">
        <path d="M8 1a11.500 11.500 0 0 0 0 22A14 14 0 0 1 8 1z" fill="#f7941e" />
        <circle cx="14" cy="12" r="10" fill="#2c2255" />
        <path d="M4.500 9h19M4 12h20M4.500 15h19" stroke="#e8e6f2" strokeWidth="1.600" />
      </svg>
    ),
  },
  {
    run: "open",
    icon: (
      <svg viewBox="0 0 24 24" className="h-6 w-6">
        <path d="M17 0l7 3v18l-7 3z" fill="#b98cf5" />
        <path d="M17 0v8L4 19l-4-2V7l4-2 13 11v8L4 13z" fill="#8d57d6" />
        <path d="M0 8l4-3 13 12v7z" fill="#a06ae6" />
        <path d="M3 9.500v5L6 12z" fill="#1c2124" />
      </svg>
    ),
  },
  {
    icon: (
      <svg viewBox="0 0 24 24" className="h-6 w-6">
        <path d="M17 0L0 15.500l2.500 2.500L17 7z" fill="#0f7fcb" />
        <path d="M17 24L0 8.500 2.500 6 17 17z" fill="#1a8fdb" />
        <path d="M17 0l7 3v18l-7 3z" fill="#2aa9f3" />
      </svg>
    ),
  },
  { icon: <SiGodotengine className="h-[22px] w-[22px] text-[#4a90c4]" /> },
  {
    icon: (
      <svg viewBox="0 0 24 24" className="h-6 w-6">
        <path d="M6 3h5l1 3 1-3h5l5 6-11 13L1 9z" fill="#ee3124" />
        <path d="M12 6l5 4-5 12z" fill="#d8271c" />
      </svg>
    ),
  },
  {
    run: "open",
    icon: (
      <div className="flex h-6 w-6 items-center justify-center rounded-full bg-[radial-gradient(circle,#f2f6fa_66%,#12396b_68%)]">
        <SiSteam className="h-6 w-6 text-[#12396b]" />
      </div>
    ),
  },
  {
    icon: (
      <div className="flex h-6 w-6 items-center justify-center rounded-full bg-[#5865f2]">
        <SiDiscord className="h-[14px] w-[14px] text-white" />
      </div>
    ),
  },
  { run: "open", icon: <SiSpotify className="h-6 w-6 text-[#1ed760]" /> },
  {
    icon: (
      <svg viewBox="-12 -12 24 24" className="h-6 w-6">
        <circle r="11.500" fill="#fff" />
        {[0, 30, 60, 90, 120, 150].map((a) => (
          <path key={a} d="M0-8V-2.500M0 2.500V8" transform={`rotate(${a})`} stroke="#5a5fd8" strokeWidth="1.800" strokeLinecap="round" />
        ))}
      </svg>
    ),
  },
  {
    icon: (
      <svg viewBox="0 0 24 24" className="h-6 w-6">
        <path d="M13 0L4 5q-2 1-2 3v8q0 2 2 3l4 2V10l6-4z" fill="#7a86f0" />
        <path d="M13 0l7 5q2 1 2 3v7l-7 3V10l-5-4z" fill="#4aa3e8" />
        <path d="M4 19l8-4 4 2 6-3v2q0 2-2 3l-6 4q-2 1-4 0z" fill="#b07bea" />
        <path d="M8.500 10l4-2.500L16 10v5l-4 2-3.500-2z" fill="#1c2124" />
      </svg>
    ),
  },
  {
    icon: (
      <div className={"flex h-6 w-6 items-center justify-center bg-[linear-gradient(#1d4b66,#0b1420)] text-[11px] font-bold tracking-[-0.8px] text-white [-webkit-text-stroke:0.5px_white] " + ARIAL}>BAR</div>
    ),
  },
  {
    icon: (
      <div className={"flex h-5 w-5 items-center justify-center bg-[linear-gradient(135deg,#00577f_55%,#2c3236_56%)] text-[15px] font-bold text-white " + UI}>R</div>
    ),
  },
];

function Taskbar() {
  return (
    <div className={"flex h-10 items-stretch bg-[#1c2124] text-white " + UI}>
      <div className="flex w-12 items-center justify-center">
        <svg viewBox="0 0 16 16" className="h-4 w-4" fill="#fff">
          <path d="M0 2.200l6.500-.9v6.200H0zM7.500 1.200L16 0v7.500H7.500zM0 8.500h6.500v6.200L0 13.800zM7.500 8.500H16V16l-8.500-1.200z" />
        </svg>
      </div>
      <div className="flex w-[288px] items-center border border-[#6a6c6d] bg-[#303132] pl-[10px]">
        <svg viewBox="0 0 18 18" className="h-[18px] w-[18px]" fill="none" stroke="#e8e8e8" strokeWidth="1.400">
          <circle cx="11" cy="6.500" r="5.200" />
          <path d="M7.300 10.500L1.500 16.500" />
        </svg>
        <div className="ml-[11px] pt-px text-[14.500px] tracking-[-0.320px] text-[#d6d6d6]">Type here to search</div>
        <svg viewBox="0 0 54 36" className="ml-auto mr-[11px] h-9 w-[54px]">
          <path d="M8 32l-1 4M46 32l1 4" stroke="#5468a8" strokeWidth="2" />
          <rect y="1" width="54" height="32" rx="7" fill="#8492cf" />
          <rect x="3" y="3" width="41" height="28" rx="5" fill="#3e8fa6" />
          <rect x="4.500" y="4.500" width="37" height="25" rx="4" fill="#c9ecff" />
          <path d="M5 23q18-5 37 0v3q0 4-4 4H9q-4 0-4-4z" fill="#fff" />
          <path d="M14 27V10M14 18l-5-5M14 17l5-4M14 21l-5-3M14 14l3-4" stroke="#8a6a3c" strokeWidth="1.400" />
          <circle cx="11" cy="10" r="1.800" fill="#7fae54" />
          <circle cx="16" cy="8" r="1.500" fill="#7fae54" />
          <circle cx="8.500" cy="14" r="1.300" fill="#7fae54" />
          <circle cx="18" cy="14" r="2.200" fill="#e23b2e" />
          <path d="M9 25h10l-1 4h-8z" fill="#a97b3d" />
          <circle cx="31" cy="24" r="6" fill="#eef6ff" stroke="#b5cbe0" strokeWidth=".5" />
          <circle cx="30" cy="13.500" r="4" fill="#fff" />
          <path d="M26 10l7-1-1-4h-4z" fill="#2c3a63" />
          <path d="M26 17q5 3 9 1l5 4-2 1.500-5-2.500q-5 0-7-2z" fill="#f1663a" />
          <circle cx="48" cy="11" r="3.200" fill="#5a69ab" />
          <circle cx="48" cy="21" r="3.200" fill="#5a69ab" />
          <path d="M46 11h4M46 22l4-2" stroke="#c6cef0" />
        </svg>
      </div>
      <div className="ml-[2px] flex">
        {APPS.map((a, i) => (
          <div key={i} className="flex w-[49px] justify-center">
            <div
              className={
                "relative flex h-10 items-center justify-center " +
                (a.run === "active" ? "w-12 border-b-2 border-[#76c996] bg-[#4b4e50] pt-[2px]" : a.run === "open" ? "w-10 border-b-2 border-[#76c996] pt-[2px]" : "w-10")
              }
            >
              {a.icon}
            </div>
          </div>
        ))}
      </div>
      <div className="ml-auto flex items-center">
        <svg viewBox="0 0 12 8" className="h-[8px] w-[12px]" fill="none" stroke="#e8e8e8" strokeWidth="1.400">
          <path d="M1 7l5-5.500L11 7" />
        </svg>
        <svg viewBox="0 0 17 15" className="ml-[10px] h-[15px] w-[17px]" fill="none" stroke="#f0f0f0" strokeWidth="1.200">
          <path d="M6 1.600h10.400v8.300H4v-4M10 10v3M6 13.400h8M.6 1h4v4h-4zM2.600 5v6H4" />
        </svg>
        <svg viewBox="0 0 17 16" className="ml-[7px] h-4 w-[17px]" fill="none" stroke="#f0f0f0" strokeWidth="1.200">
          <path d="M1 5.500h2l4-3.500v12L3 10.500H1zM9 6q1.500 2 0 4" />
          <path d="M11 4.500q3 3.500 0 7M13.500 2.500q4 5.500 0 11" stroke="#85888a" />
        </svg>
        <div className="ml-[4px] w-[60px] text-center text-[12px] leading-[18px] tracking-[-0.400px]">
          11:24 AM
          <br />
          12/3/2023
        </div>
        <svg viewBox="0 0 28 28" className="ml-[14px] mt-[2px] h-7 w-7">
          <path d="M2 2h16v11H9l-4 4v-4H2z" fill="#fff" />
          <path d="M5 5.500h10M5 9h10" stroke="#1c2124" strokeWidth="1.200" />
          <circle cx="17.500" cy="17" r="8" fill="#2b2f32" stroke="#7d8082" />
          <text x="17.500" y="21.500" fontSize="12" textAnchor="middle" fill="#fff" fontFamily="Open Sans">2</text>
        </svg>
        <div className="ml-[10px] mr-[3px] h-10 w-px bg-[#85888a]" />
      </div>
    </div>
  );
}

export default function App() {
  return (
    <div className="h-[1080px] w-[1920px] overflow-hidden bg-[#1d1e20]">
      <TabStrip />
      <AddressBar />
      <Header />
      <Toolbar />
      <div className="flex h-[850px]">
        <Sidebar />
        <CanvasArea />
        <FormatPanel />
      </div>
      <Taskbar />
    </div>
  );
}
